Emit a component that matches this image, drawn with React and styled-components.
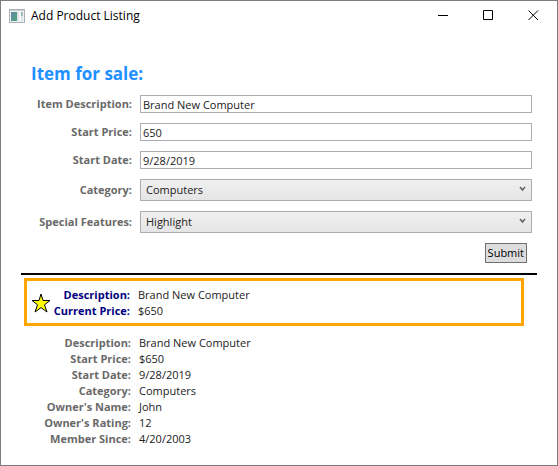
import React from "react";
import styled, { createGlobalStyle } from "styled-components";

const GlobalStyle = createGlobalStyle`
  *, *::before, *::after { box-sizing: border-box; }
  body {
    margin: 0;
    background: #fff;
    color: #222;
    font: 11px/16px "Open Sans", "Noto Sans", sans-serif;
  }
`;

const Window = styled.div`
  display: flex;
  flex-direction: column;
  min-height: 100vh;
  border: 1px solid #7d7d7d;
  background: #fff;
`;

const TitleBar = styled.header`
  display: flex;
  align-items: center;
  height: 29px;
  padding: 0 1px 0 8px;
  color: #000;
`;

const Title = styled.h1`
  flex: 1;
  margin: 0 0 0 6px;
  font-size: 12px;
  font-weight: 400;
`;

const CaptionButton = styled.button`
  display: flex;
  align-items: center;
  justify-content: center;
  width: 45px;
  height: 28px;
  padding: 0;
  border: 0;
  background: transparent;
  color: #000;
`;

const Content = styled.main`
  display: flex;
  flex-direction: column;
  padding: 33px 20px 16px;
`;

const Form = styled.form`
  display: grid;
  grid-template-columns: 111px 1fr;
  gap: 10px 8px;
  align-items: center;
  padding: 0 5px 0 0;
`;

const FormTitle = styled.h2`
  grid-column: 1 / -1;
  margin: 0 0 0 10px;
  color: #1e90ff;
  font-size: 17px;
  line-height: 22px;
  font-weight: 700;
`;

const FieldLabel = styled.label`
  color: #696969;
  font-weight: 700;
  text-align: right;
  white-space: nowrap;
`;

const TextBox = styled.input`
  width: 100%;
  min-width: 0;
  height: 18px;
  padding: 0 2px;
  border: 1px solid #abadb3;
  border-radius: 0;
  background: #fff;
  color: #222;
  font: inherit;
`;

const SelectFrame = styled.div`
  position: relative;
  display: flex;
`;

const Select = styled.select`
  appearance: none;
  width: 100%;
  height: 22px;
  padding: 0 20px 0 5px;
  border: 1px solid #acacac;
  border-radius: 0;
  background: linear-gradient(#f0f0f0, #e5e5e5);
  color: #222;
  font: inherit;
`;

const Chevron = styled.svg`
  position: absolute;
  top: 7px;
  right: 6px;
  pointer-events: none;
`;

const SubmitButton = styled.button`
  grid-column: 2;
  justify-self: end;
  height: 20px;
  margin-right: 5px;
  padding: 0 2px;
  border: 1px solid #707070;
  border-radius: 0;
  background: #ddd;
  color: #000;
  font: inherit;
`;

const Divider = styled.hr`
  width: 100%;
  height: 2px;
  margin: 10px 0 3px;
  border: 0;
  background: #000;
`;

const Highlight = styled.section`
  display: flex;
  align-items: center;
  margin: 0 13px 0 3px;
  padding: 6px 5px 4px 4px;
  border: 3px solid #ffa500;
`;

const Facts = styled.dl`
  display: grid;
  grid-template-columns: ${(p) => p.$labelWidth}px 1fr;
  column-gap: 8px;
  margin: 0;
`;

const Term = styled.dt`
  color: ${(p) => (p.$strong ? "#000080" : "#696969")};
  font-weight: 700;
  text-align: right;
  white-space: nowrap;
`;

const Value = styled.dd`
  margin: 0;
  color: #222;
`;

const Details = styled.section`
  margin-top: 9px;
`;

function AppIcon() {
  return (
    <svg width="16" height="14" viewBox="0 0 16 14" aria-hidden="true">
      <defs>
        <linearGradient id="pane" x1="0" y1="0" x2="1" y2="1">
          <stop offset="0" stopColor="#6683a8" />
          <stop offset="1" stopColor="#4aa878" />
        </linearGradient>
      </defs>
      <rect x="0.5" y="0.5" width="15" height="13" fill="#eef0f2" stroke="#a9afb5" />
      <rect x="1" y="1" width="14" height="1" fill="#c9ced3" />
      <rect x="2" y="3" width="6" height="9" fill="url(#pane)" />
      <rect x="8" y="3" width="4" height="9" fill="#dfe3e8" />
      <rect x="10" y="3" width="2" height="9" fill="#f6f7f8" />
      <rect x="12" y="3" width="2" height="4" fill="#9dbcb4" />
      <rect x="12" y="7" width="2" height="5" fill="#dce3ea" />
    </svg>
  );
}

function CaptionGlyph({ d }) {
  return (
    <svg width="11" height="11" viewBox="0 0 11 11" fill="none" stroke="currentColor" aria-hidden="true">
      <path d={d} />
    </svg>
  );
}

function Star() {
  return (
    <svg width="20" height="20" viewBox="0 0 20 20" aria-hidden="true">
      <path
        d="M10 1 L12 7.5 H19 L13.5 11.8 L16 19 L10 14.6 L4 19 L6.500 11.800 L1 7.500 H8 Z"
        fill="#ff0"
        stroke="#000"
      />
    </svg>
  );
}

function TextField({ id, label, value }) {
  return (
    <>
      <FieldLabel htmlFor={id}>{label}</FieldLabel>
      <TextBox id={id} type="text" defaultValue={value} />
    </>
  );
}

function SelectField({ id, label, options }) {
  return (
    <>
      <FieldLabel htmlFor={id}>{label}</FieldLabel>
      <SelectFrame>
        <Select id={id}>
          {options.map((option) => (
            <option key={option}>{option}</option>
          ))}
        </Select>
        <Chevron width="7" height="6" viewBox="0 0 7 6" fill="none" stroke="#606060" strokeWidth="1.5" aria-hidden="true">
          <path d="M1 1 L3.500 4 L6 1" />
        </Chevron>
      </SelectFrame>
    </>
  );
}

function FactList({ items, labelWidth, strong }) {
  return (
    <Facts $labelWidth={labelWidth}>
      {items.map(([term, value]) => (
        <React.Fragment key={term}>
          <Term $strong={strong}>{term}:</Term>
          <Value>{value}</Value>
        </React.Fragment>
      ))}
    </Facts>
  );
}

const summary = [
  ["Description", "Brand New Computer"],
  ["Current Price", "$650"],
];

const details = [
  ["Description", "Brand New Computer"],
  ["Start Price", "$650"],
  ["Start Date", "9/28/2019"],
  ["Category", "Computers"],
  ["Owner's Name", "John"],
  ["Owner's Rating", "12"],
  ["Member Since", "4/20/2003"],
];

export default function App() {
  return (
    <>
      <GlobalStyle />
      <Window>
        <TitleBar>
          <AppIcon />
          <Title>Add Product Listing</Title>
          <CaptionButton type="button" aria-label="Minimize">
            <CaptionGlyph d="M0 5.500 H10" />
          </CaptionButton>
          <CaptionButton type="button" aria-label="Maximize">
            <CaptionGlyph d="M0.500 0.500 H9.500 V9.500 H0.500 Z" />
          </CaptionButton>
          <CaptionButton type="button" aria-label="Close">
            <CaptionGlyph d="M0.500 0.500 L10 10 M10 0.500 L0.500 10" />
          </CaptionButton>
        </TitleBar>
        <Content>
          <Form onSubmit={(event) => event.preventDefault()}>
            <FormTitle>Item for sale:</FormTitle>
            <TextField id="description" label="Item Description:" value="Brand New Computer" />
            <TextField id="price" label="Start Price:" value="650" />
            <TextField id="date" label="Start Date:" value="9/28/2019" />
            <SelectField id="category" label="Category:" options={["Computers", "Books", "Clothing"]} />
            <SelectField id="features" label="Special Features:" options={["Highlight", "Color", "None"]} />
            <SubmitButton type="submit">Submit</SubmitButton>
          </Form>
          <Divider />
          <Highlight>
            <Star />
            <FactList items={summary} labelWidth={79} strong />
          </Highlight>
          <Details>
            <FactList items={details} labelWidth={110} />
          </Details>
        </Content>
      </Window>
    </>
  );
}
